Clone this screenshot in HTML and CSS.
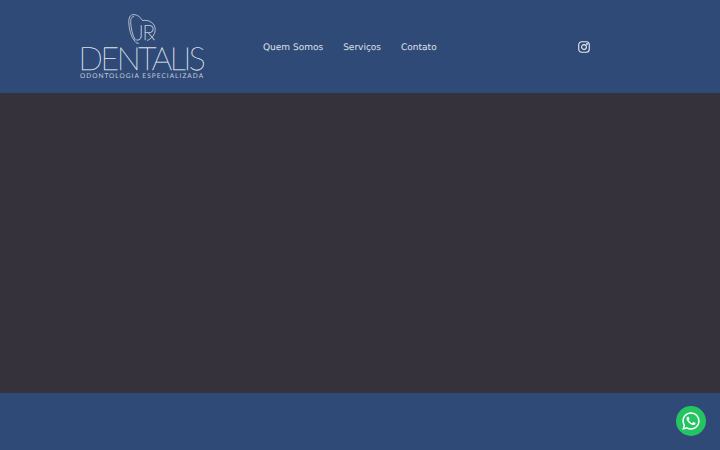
FILE: index.html
```html
<!DOCTYPE html>
<html>
<head>
    <title>Dentalis</title>
    <link rel="stylesheet" href="styles.css">
</head>
<body>
    <div class="header">
        <a class="logo" href="#">
            <svg class="logo-mark" width="28" height="30" viewBox="0 0 28 30" fill="none" stroke="#d5d9e2" stroke-width="0.8">
                <path d="M6 .6C1.800 .4 .6 4 .8 9C1.100 15 3 23 7 27.500C8 29 10 29.800 11 29"/>
                <path d="M6 2.500C3.500 2.500 2.500 5 2.700 9C3 14 4.500 21 7 25.500"/>
                <path d="M6 .6C10 .8 12.500 3.500 14.500 6.500"/>
                <path d="M14.500 6.500C21 5.500 27.200 9 27.200 15.500C27.200 20.500 23.500 25 19 26.500"/>
                <text class="logo-initials" x="7" y="26">JR</text>
            </svg>
            <span class="logo-name">DENTALIS</span>
            <span class="logo-tag">ODONTOLOGIA ESPECIALIZADA</span>
        </a>
        <div class="nav">
            <a href="#">Quem Somos</a>
            <a href="#">Serviços</a>
            <a href="#">Contato</a>
        </div>
        <a class="insta" href="#">
            <svg width="12" height="12" viewBox="0 0 13 13" fill="none" stroke="#e8eaef" stroke-width="1.2">
                <rect x="0.8" y="0.8" width="11.4" height="11.4" rx="3.2"/>
                <circle cx="6.5" cy="6.5" r="2.6"/>
                <circle cx="9.8" cy="3.2" r="0.4" fill="#e8eaef"/>
            </svg>
        </a>
    </div>

    <div class="hero"></div>

    <div class="footer"></div>

    <a class="whatsapp" href="#">
        <svg width="20" height="20" viewBox="0 0 24 24" fill="#fff">
            <path d="M12 1.6C6.2 1.6 1.6 6.2 1.6 12c0 1.9.5 3.7 1.4 5.3L1.5 22.6l5.4-1.4c1.5.8 3.3 1.3 5.1 1.3 5.8 0 10.4-4.7 10.4-10.4S17.800 1.600 12 1.600zm0 19c-1.600 0-3.100-.4-4.500-1.200l-.3-.2-3.200.8.900-3.100-.2-.3c-.9-1.400-1.300-3-1.300-4.600 0-4.800 3.900-8.600 8.600-8.600s8.600 3.900 8.600 8.600-3.900 8.600-8.600 8.600z"/>
            <path d="M16.800 14.200c-.3-.1-1.600-.8-1.800-.9-.2-.1-.4-.1-.6.1-.2.300-.7.900-.8 1-.1.200-.3.200-.6.100-.3-.1-1.100-.4-2.100-1.300-.8-.7-1.300-1.600-1.500-1.800-.2-.3 0-.4.100-.6l.4-.5c.1-.2.200-.3.300-.5.100-.2 0-.4 0-.5-.1-.1-.6-1.400-.8-2-.2-.5-.4-.4-.6-.4h-.5c-.2 0-.5.100-.7.300-.2.300-.9.900-.9 2.200s.9 2.500 1.100 2.700c.1.200 1.900 2.900 4.500 4 .6.300 1.100.4 1.500.6.600.2 1.200.2 1.600.1.500-.1 1.600-.6 1.800-1.300.2-.6.200-1.200.2-1.300-.1-.1-.3-.2-.6-.3z"/>
        </svg>
    </a>
</body>
</html>
```

FILE: styles.css
```css
/* base */
body {
    margin: 0;
    height: 450px;
    overflow: hidden;
    display: flex;
    flex-direction: column;
    font-family: "DejaVu Sans", sans-serif;
    background: #304a78;
    text-rendering: geometricPrecision;
}
a {
    text-decoration: none;
    color: inherit;
}

.header {
    height: 93px;
    display: flex;
    align-items: center;
    padding-left: 80px;
    background: #304a78;
    color: #dfe2e8;
}

/* logo */
.logo {
    width: 124px;
    padding-top: 2px;
    display: flex;
    flex-direction: column;
    align-items: center;
    color: #dfe2e8;
    font-family: Lato, "Liberation Sans", sans-serif;
}
.logo-mark {
    display: block;
}
.logo-initials {
    font-family: Lato, "Liberation Sans", sans-serif;
    font-size: 21px;
    font-weight: 100;
    letter-spacing: -1px;
    fill: #dfe2e8;
    stroke: #dfe2e8;
    stroke-width: 0.3;
}
.logo-name {
    margin-top: 1px;
    margin-left: -2px;
    font-size: 32px;
    font-weight: 100;
    line-height: 26px;
    letter-spacing: -2.4px;
    white-space: nowrap;
    -webkit-text-stroke: 0.35px #dfe2e8;
}
.logo-tag {
    margin-top: 1px;
    font-size: 6.5px;
    font-weight: 400;
    line-height: 9px;
    letter-spacing: 1.05px;
    white-space: nowrap;
    color: #c6ccd9;
}

.nav {
    display: flex;
    gap: 20px;
    margin-left: 59px;
    margin-top: 2px;
    font-size: 9px;
}

.insta {
    display: flex;
    margin-left: 141px;
}

.hero {
    height: 300px;
    background: #35323b;
}
.footer {
    flex: 1;
    background: #304a78;
}

/* floating button */
.whatsapp {
    position: fixed;
    right: 14px;
    bottom: 14px;
    width: 30px;
    height: 30px;
    border-radius: 50%;
    background: #25c463;
    display: flex;
    align-items: center;
    justify-content: center;
}
```
